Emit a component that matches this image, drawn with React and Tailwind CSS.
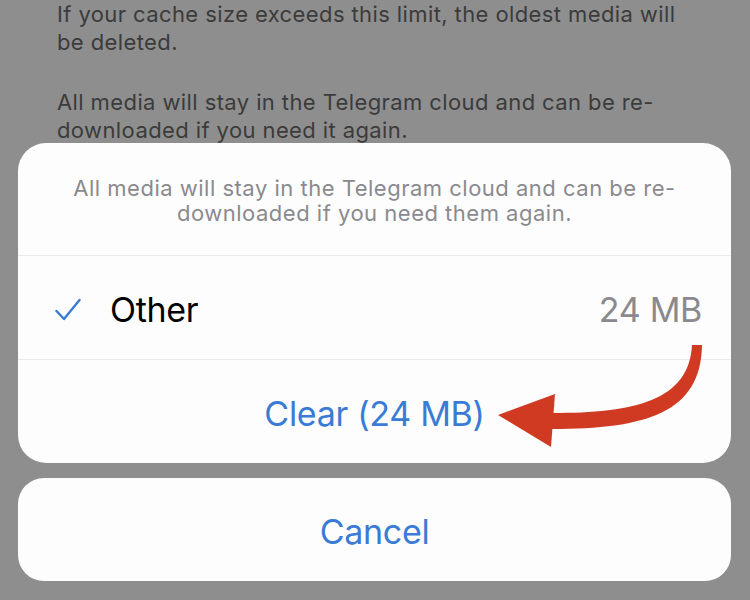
function CheckMark() {
  return (
    <svg width="26" height="24" viewBox="0 0 26 24" fill="none" className="shrink-0">
      <path d="M1.5 13 L9 21 L24.5 2" stroke="#3a7bd5" strokeWidth="2.4" strokeLinecap="round" strokeLinejoin="round" />
    </svg>
  )
}

function RedArrow() {
  return (
    <svg
      className="absolute inset-0 pointer-events-none"
      width="750"
      height="600"
      viewBox="0 0 750 600"
    >
      <path
        d="M702 345 C701 413 646 429 552 429 L552 413 C634 413 689 401 692 345 Z"
        fill="#d03a22"
      />
      <path d="M498 415 L555 394 L551 447 Z" fill="#d03a22" />
    </svg>
  )
}

export default function App() {
  return (
    <div
      className="relative w-[750px] h-[600px] overflow-hidden bg-[#8e8e8e]"
      style={{ fontFamily: 'Inter, "Liberation Sans", sans-serif' }}
    >
      <div className="pl-[57px] pr-[60px] text-[22px] leading-[28px] tracking-[0.4px] text-[#3b3b3b]">
        <p>If your cache size exceeds this limit, the oldest media will be deleted.</p>
        <p className="mt-[32px]">
          All media will stay in the Telegram cloud and can be re-downloaded if you need it again.
        </p>
      </div>

      <div className="absolute left-[18px] right-[19px] top-[143px] flex flex-col gap-[15px]">
        <div className="bg-[#fdfdfd] rounded-[28px] overflow-hidden">
          <p className="px-[40px] pt-[33px] pb-[29px] text-center text-[22px] leading-[25px] tracking-[0.5px] text-[#8a8a8e]">
            All media will stay in the Telegram cloud and can be re-downloaded if you need them again.
          </p>
          <div className="h-px bg-[#ebebed]" />
          <div className="h-[103px] pt-1 flex items-center pl-[37px] pr-[29px] text-[34px] tracking-[-0.3px]">
            <CheckMark />
            <span className="ml-[29px] text-black">Other</span>
            <span className="ml-auto text-[#8a8a8e]">24 MB</span>
          </div>
          <div className="h-px bg-[#ebebed]" />
          <div className="h-[103px] pt-1 flex items-center justify-center text-[34px] tracking-[-0.3px] text-[#3a7bd5]">
            Clear (24 MB)
          </div>
        </div>

        <div className="h-[103px] pt-1 bg-[#fdfdfd] rounded-[26px] flex items-center justify-center text-[34px] tracking-[-0.3px] text-[#3a7bd5]">
          Cancel
        </div>
      </div>

      <RedArrow />
    </div>
  )
}
